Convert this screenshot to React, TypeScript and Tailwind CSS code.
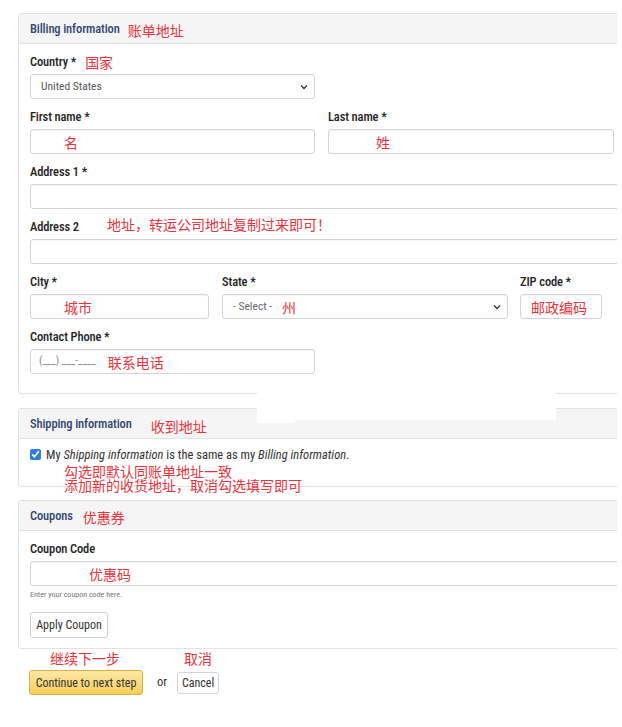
import React from 'react';

const ui = "font-['Roboto_Condensed','Roboto','Noto_Sans_CJK_SC',sans-serif]";
const red = "font-['Noto_Sans_CJK_SC',sans-serif] text-[14px] leading-none text-[#e8343c]";

const Label: React.FC<{ text: string; note?: string; noteClass?: string }> = ({ text, note, noteClass }) => (
    <div className="flex h-4 items-center mb-1">
        <span className="text-[12.5px] font-medium text-[#222] tracking-[-0.01em]">{text}</span>
        {note && <span className={`${red} ${noteClass ?? 'ml-[9px]'}`}>{note}</span>}
    </div>
);

const Box: React.FC<{ className?: string; children?: React.ReactNode }> = ({ className = '', children }) => (
    <div className={`h-[25px] border border-[#d4d4d4] rounded-[3px] bg-white flex items-center shadow-[inset_0_1px_1px_rgba(0,0,0,0.04)] ${className}`}>
        {children}
    </div>
);

const Chevron = () => (
    <svg width="8" height="6" viewBox="0 0 8 6" className="ml-auto mr-[6px]">
        <path d="M1 1.5 L4 4.5 L7 1.5" fill="none" stroke="#333" strokeWidth="1.3" />
    </svg>
);

const Panel: React.FC<{ title: string; note: string; noteClass: string; children: React.ReactNode; bodyClass?: string }> = ({ title, note, noteClass, children, bodyClass = '' }) => (
    <div className="w-[640px] border border-[#e2e2e2] rounded-[3px] bg-white">
        <div className="h-[30px] bg-[#f5f5f5] border-b border-[#e2e2e2] flex items-center px-[11px] pt-[2px]">
            <span className="text-[12.5px] font-medium text-[#31456e] tracking-[-0.01em]">{title}</span>
            <span className={`${red} ${noteClass}`}>{note}</span>
        </div>
        <div className={`relative px-[11px] ${bodyClass}`}>{children}</div>
    </div>
);

export default function App() {
    return (
        <div className={`relative w-[617px] h-[727px] overflow-hidden bg-white pl-[18px] pt-[13px] ${ui}`}>
            <Panel title="Billing information" note="账单地址" noteClass="ml-[8px]" bodyClass="pt-[10px] pb-[19px]">
                <Label text="Country *" note="国家" />
                <Box className="w-[285px] pl-[10px]">
                    <span className="text-[11.5px] text-[#555]">United States</span>
                    <Chevron />
                </Box>

                <div className="flex gap-[13px] mt-[10px]">
                    <div className="w-[285px]">
                        <Label text="First name *" />
                        <Box className="pl-[33px]"><span className={red}>名</span></Box>
                    </div>
                    <div className="w-[286px]">
                        <Label text="Last name *" />
                        <Box className="pl-[47px]"><span className={red}>姓</span></Box>
                    </div>
                </div>

                <div className="mt-[10px]">
                    <Label text="Address 1 *" />
                    <Box className="w-[600px]" />
                </div>

                <div className="mt-[10px]">
                    <Label text="Address 2" note="地址，转运公司地址复制过来即可！" noteClass="ml-[28px] -mt-[6px]" />
                    <Box className="w-[600px]" />
                </div>

                <div className="flex mt-[10px]">
                    <div className="w-[179px]">
                        <Label text="City *" />
                        <Box className="pl-[33px]"><span className={red}>城市</span></Box>
                    </div>
                    <div className="w-[286px] ml-[13px]">
                        <Label text="State *" />
                        <Box className="pl-[10px]">
                            <span className="text-[11.5px] text-[#666]">- Select -</span>
                            <span className={`${red} ml-[10px]`}>州</span>
                            <Chevron />
                        </Box>
                    </div>
                    <div className="w-[82px] ml-[12px]">
                        <Label text="ZIP code *" />
                        <Box className="pl-[10px]"><span className={red}>邮政编码</span></Box>
                    </div>
                </div>

                <div className="mt-[10px]">
                    <Label text="Contact Phone *" />
                    <Box className="w-[285px] pl-[8px]">
                        <span className="text-[11px] text-[#888]">(___) ___-____</span>
                        <span className={`${red} ml-[12px]`}>联系电话</span>
                    </Box>
                </div>
            </Panel>

            <div className="h-[14px]" />

            <Panel title="Shipping information" note="收到地址" noteClass="ml-[19px] mt-[2px]" bodyClass="h-[47px] pt-[8px]">
                <label className="flex items-center gap-[3px] text-[12.5px] leading-[15px] text-[#333]">
                    <input type="checkbox" defaultChecked className="w-[11px] h-[11px] accent-[#2f7de1] m-0 mr-[2px]" />
                    <span>My <i>Shipping information</i> is the same as my <i>Billing information</i>.</span>
                </label>
                <div className={`absolute left-[45px] top-[25px] ${red} leading-[21px]`}>
                    <div>勾选即默认同账单地址一致</div>
                    <div>添加新的收货地址，取消勾选填写即可</div>
                </div>
            </Panel>

            <div className="h-[13px]" />

            <Panel title="Coupons" note="优惠券" noteClass="ml-[10px]" bodyClass="pt-[10px] pb-[10px]">
                <Label text="Coupon Code" />
                <Box className="w-[600px] pl-[58px]"><span className={red}>优惠码</span></Box>
                <div className="text-[8px] text-[#777] mt-[3px] h-[12px] leading-[12px]">Enter your coupon code here.</div>
                <button className="mt-[11px] h-[26px] w-[78px] border border-[#cfcfcf] rounded-[3px] bg-white text-[12px] text-[#333]">
                    Apply Coupon
                </button>
            </Panel>

            <div className="flex mt-[2px] h-[14px] items-center">
                <span className={`${red} ml-[32px]`}>继续下一步</span>
                <span className={`${red} ml-[64px]`}>取消</span>
            </div>
            <div className="flex items-center mt-[5px] ml-[11px]">
                <button className="h-[25px] w-[114px] rounded-[3px] border border-[#d8b248] bg-gradient-to-b from-[#fde8a6] to-[#f5cd55] text-[12px] text-[#333]">
                    Continue to next step
                </button>
                <span className="ml-[14px] text-[12.5px] text-[#333]">or</span>
                <button className="ml-[10px] h-[22px] w-[42px] rounded-[3px] border border-[#d4d4d4] bg-white text-[12px] text-[#333]">
                    Cancel
                </button>
            </div>

            <div className="absolute left-[257px] top-[390px] w-[299px] h-[30px] bg-white" />
            <div className="absolute left-[257px] top-[419px] w-[38px] h-[4px] bg-white" />
        </div>
    );
}
